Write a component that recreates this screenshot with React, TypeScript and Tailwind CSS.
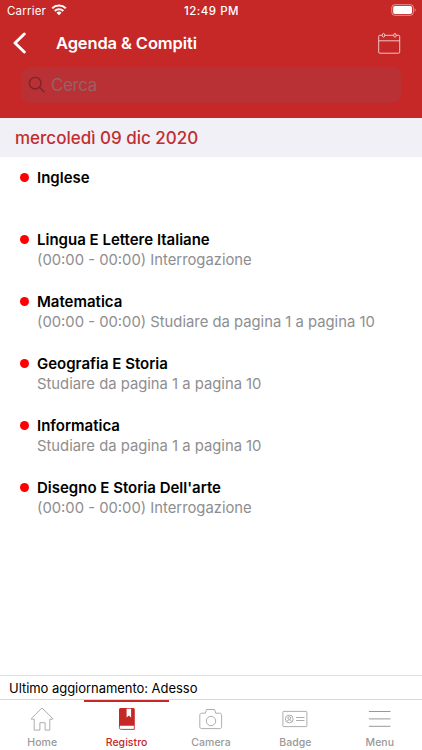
import type { ReactNode } from 'react'

interface AgendaItem {
    title: string
    note?: string
}

interface Tab {
    label: string
    icon: ReactNode
    active?: boolean
}

const items: AgendaItem[] = [
    { title: 'Inglese' },
    { title: 'Lingua E Lettere Italiane', note: '(00:00 - 00:00) Interrogazione' },
    { title: 'Matematica', note: '(00:00 - 00:00) Studiare da pagina 1 a pagina 10' },
    { title: 'Geografia E Storia', note: 'Studiare da pagina 1 a pagina 10' },
    { title: 'Informatica', note: 'Studiare da pagina 1 a pagina 10' },
    { title: "Disegno E Storia Dell'arte", note: '(00:00 - 00:00) Interrogazione' }
]

function HomeIcon() {
    return (
        <svg width="26" height="26" viewBox="0 0 26 26" fill="none" stroke="currentColor" strokeWidth="0.8" strokeLinejoin="round">
            <path d="M2.3 12.5 13 2l10.7 10.5v.7h-2.9v10.9h-4.7v-7.4h-5.2v7.4H5.2V13.2H2.3z" />
        </svg>
    )
}

function BookIcon() {
    return (
        <svg width="26" height="26" viewBox="0 0 26 26" fill="none">
            <path d="M6.6 2h12.5c1 0 1.700.7 1.700 1.700v16.100H5V3.600C5 2.700 5.700 2 6.600 2z" fill="#c62828" />
            <path d="M12.600 2.700h4.500v8.900l-2.200-2.100-2.300 2.100z" fill="#fff" />
            <path d="M5.400 19v2.500c0 1.200.6 1.900 1.800 1.900h13.100v-3.600" stroke="#c62828" strokeWidth="0.9" />
        </svg>
    )
}

function CameraIcon() {
    return (
        <svg width="26" height="26" viewBox="0 0 26 26" fill="none" stroke="currentColor" strokeWidth="0.8" strokeLinejoin="round">
            <path d="M3.700 7.200h3.700l1.100-3.700h8.100l1.100 3.700h4c1.100 0 1.900.8 1.900 1.900v11.600c0 1.100-.8 1.900-1.900 1.900h-18c-1.100 0-1.900-.8-1.900-1.900V9.100c0-1.100.8-1.900 1.900-1.900z" />
            <circle cx="13" cy="15" r="4.700" />
        </svg>
    )
}

function BadgeIcon() {
    return (
        <svg width="26" height="26" viewBox="0 0 26 26" fill="none" stroke="currentColor" strokeWidth="0.8">
            <rect x="0.900" y="5.400" width="24" height="15.200" rx="0.800" />
            <circle cx="7.300" cy="13" r="3.900" />
            <circle cx="7.300" cy="12" r="1.400" />
            <path d="M4.800 15.500c.5-1 1.400-1.500 2.500-1.500s2 .5 2.500 1.500M14 11.500h8.500M14 14.500h8.500" />
        </svg>
    )
}

function MenuIcon() {
    return (
        <svg width="26" height="26" viewBox="0 0 26 26" stroke="currentColor" strokeWidth="1">
            <path d="M1.900 5.500h21.600M1.900 12.900h21.600M1.900 20.300h21.600" />
        </svg>
    )
}

const tabs: Tab[] = [
    { label: 'Home', icon: <HomeIcon /> },
    { label: 'Registro', icon: <BookIcon />, active: true },
    { label: 'Camera', icon: <CameraIcon /> },
    { label: 'Badge', icon: <BadgeIcon /> },
    { label: 'Menu', icon: <MenuIcon /> }
]

function StatusBar() {
    return (
        <div className="grid h-[22px] grid-cols-3 items-center pl-[7px] pr-[5px] text-[11.5px] leading-[22px]">
            <div className="flex items-center gap-[5px]">
                <span className="tracking-[0.2px]">Carrier</span>
                <svg className="mb-[2px]" width="16" height="12" viewBox="0 0 16 12" fill="none" stroke="currentColor" strokeWidth="2">
                    <path d="M1.200 4.300a9.700 9.700 0 0 1 13.600 0M3.700 7a6.200 6.200 0 0 1 8.600 0" />
                    <path d="M8 11.300 5.500 8.800a3.600 3.600 0 0 1 5 0z" fill="currentColor" stroke="none" />
                </svg>
            </div>
            <div className="-ml-px text-center font-medium tracking-[0.5px]">12:49 PM</div>
            <svg className="mb-[2px] justify-self-end" width="26" height="12" viewBox="0 0 26 12">
                <rect x="0.800" y="0.700" width="21.600" height="10.600" rx="3" fill="none" stroke="#fff" strokeOpacity="0.5" />
                <rect x="2.200" y="2.100" width="18.800" height="7.800" rx="1.700" fill="#fff" />
                <path d="M23.700 4.200v3.600c1.300-.6 1.300-3 0-3.600z" fill="#fff" fillOpacity="0.5" />
            </svg>
        </div>
    )
}

function Header() {
    return (
        <header className="h-[118px] bg-[#c62828] text-white">
            <StatusBar />
            <div className="flex h-[42px] items-center pl-[13px] pr-[21px]">
                <svg width="14" height="22" viewBox="0 0 14 22" fill="none" stroke="currentColor" strokeWidth="2.900" strokeLinecap="round" strokeLinejoin="round">
                    <path d="M11.300 2 2 11l9.300 9" />
                </svg>
                <h1 className="ml-[29px] flex-1 text-[16.500px] font-semibold leading-[22px] tracking-[-0.12px]">Agenda &amp; Compiti</h1>
                <svg width="23" height="23" viewBox="0 0 23 23" fill="none" stroke="#f6d5d5" strokeWidth="0.9">
                    <rect x="0.700" y="3.300" width="21" height="17.900" rx="1" />
                    <path d="M0.700 8.800h21" />
                    <ellipse cx="5.500" cy="3.300" rx="1.200" ry="1.900" fill="#c62828" />
                    <ellipse cx="16.900" cy="3.300" rx="1.200" ry="1.900" fill="#c62828" />
                </svg>
            </div>
            <div className="ml-[21px] mr-[21px] mt-[3px] flex h-9 items-center rounded-[9px] bg-[#ba3135] pl-[7px]">
                <svg width="18" height="18" viewBox="0 0 18 18" fill="none" stroke="#7c2529" strokeWidth="1.400" strokeLinecap="round">
                    <circle cx="7.200" cy="7.200" r="5.800" />
                    <path d="m11.600 11.600 4.400 4.400" />
                </svg>
                <span className="ml-[5px] text-[17px] leading-[22px] tracking-[-0.4px] text-[#936266]">Cerca</span>
            </div>
        </header>
    )
}

function AgendaRow({ title, note }: AgendaItem) {
    return (
        <li className="flex h-[62px] items-start pl-[20px] pt-[11px]">
            <span className="mt-[5px] size-[9px] shrink-0 rounded-full bg-[#ff0000]" />
            <div className="ml-[8px]">
                <p className="text-[15px] font-semibold leading-5 text-black">{title}</p>
                {note && <p className="text-[14.800px] leading-5 text-[#8e8e90]">{note}</p>}
            </div>
        </li>
    )
}

export default function App() {
    return (
        <div className="flex h-[750px] w-[422px] flex-col overflow-hidden bg-white font-['Inter','Liberation_Sans',sans-serif]">
            <Header />
            <h2 className="h-[39px] bg-[#f1f0f6] pl-[15px] text-[17px] font-medium leading-[40px] text-[#bf2e30]">
                mercoledì 09 dic 2020
            </h2>
            <ul className="flex-1">
                {items.map((item) => (
                    <AgendaRow key={item.title} {...item} />
                ))}
            </ul>
            <div className="h-6 border-t border-[#e0e0e0] pl-[9px] text-[13px] leading-6 tracking-[-0.04px] text-black">
                Ultimo aggiornamento: Adesso
            </div>
            <nav className="grid h-[51px] grid-cols-5 border-t border-[#d8d8d8]">
                {tabs.map(({ label, icon, active }) => (
                    <div
                        key={label}
                        className={`flex flex-col items-center border-t-2 pt-[4px] ${active ? 'border-[#c62828] text-[#c62828]' : 'border-transparent text-[#999999]'}`}
                    >
                        {icon}
                        <span className="mt-[4px] text-[10.500px] font-medium leading-[14px] tracking-[0.05px]">{label}</span>
                    </div>
                ))}
            </nav>
        </div>
    )
}
